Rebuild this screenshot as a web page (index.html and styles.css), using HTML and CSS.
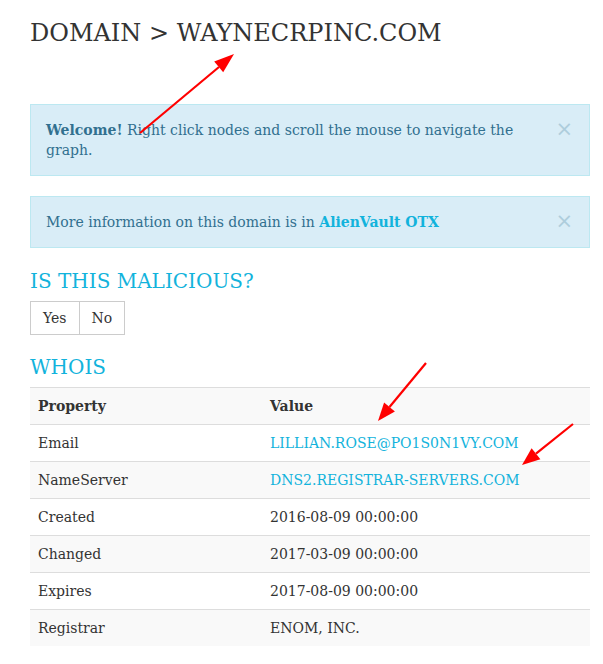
FILE: index.html
```html
<!DOCTYPE html>
<html>
<head>
<meta charset="utf-8">
<link rel="stylesheet" href="styles.css">
</head>
<body>
<div class="page">
  <h1 class="title">DOMAIN &gt; WAYNECRPINC.COM</h1>

  <div class="alert alert-tall">
    <span class="close">×</span>
    <p><strong>Welcome!</strong> Right click nodes and scroll the mouse to navigate the graph.</p>
  </div>

  <div class="alert">
    <span class="close">×</span>
    <p>More information on this domain is in <a class="alert-link" href="#">AlienVault OTX</a></p>
  </div>

  <h3 class="section section-vote">IS THIS MALICIOUS?</h3>
  <div class="btn-group">
    <button class="btn">Yes</button>
    <button class="btn">No</button>
  </div>

  <h3 class="section section-whois">WHOIS</h3>
  <table class="whois">
    <tbody>
      <tr><th class="col-prop">Property</th><th>Value</th></tr>
      <tr><td>Email</td><td><a href="#">LILLIAN.ROSE@PO1S0N1VY.COM</a></td></tr>
      <tr><td>NameServer</td><td><a href="#">DNS2.REGISTRAR-SERVERS.COM</a></td></tr>
      <tr><td>Created</td><td>2016-08-09 00:00:00</td></tr>
      <tr><td>Changed</td><td>2017-03-09 00:00:00</td></tr>
      <tr><td>Expires</td><td>2017-08-09 00:00:00</td></tr>
      <tr><td>Registrar</td><td>ENOM, INC.</td></tr>
    </tbody>
  </table>
</div>

<svg class="annotations" width="603" height="664" viewBox="0 0 603 664">
  <g stroke="#ff0000" stroke-width="2.2" fill="#ff0000">
    <line x1="140" y1="133" x2="219" y2="67"/>
    <polygon stroke="none" points="234,54 223.2,72.2 214.2,61.5"/>
    <line x1="426" y1="363" x2="389.5" y2="407"/>
    <polygon stroke="none" points="378,421 394.9,411.6 384.1,402.6"/>
    <line x1="573" y1="424" x2="536" y2="453.7"/>
    <polygon stroke="none" points="522,465 540.4,459.2 531.6,448.2"/>
  </g>
</svg>
</body>
</html>
```

FILE: styles.css
```css
html, body {
  margin: 0;
  padding: 0;
  background: #fff;
}

body {
  font-family: "DejaVu Serif", serif;
  font-size: 14px;
  line-height: 20px;
  color: #333;
  position: relative;
  width: 603px;
  height: 664px;
  overflow: hidden;
}

.page {
  padding: 0 13px 0 30px;
}

.title {
  font-size: 24px;
  font-weight: normal;
  line-height: 30px;
  margin: 18px 0 56px;
  color: #333;
}

.alert {
  position: relative;
  background: #d9edf7;
  border: 1px solid #bce8f1;
  color: #31708f;
  padding: 15px 50px 15px 15px;
  margin-bottom: 20px;
}

.alert p {
  margin: 0;
}

.alert strong {
  font-weight: bold;
}

.alert-link {
  color: #12b3dc;
  font-weight: bold;
  text-decoration: none;
}

.close {
  position: absolute;
  top: 14px;
  right: 16px;
  font-size: 21px;
  line-height: 20px;
  font-family: "DejaVu Sans", sans-serif;
  color: #31708f;
  opacity: 0.25;
}

.section {
  font-weight: normal;
  color: #12b3dc;
  margin: 0;
}

.section-vote {
  font-size: 20px;
  line-height: 24px;
  margin-top: 21px;
  margin-bottom: 8px;
}

.section-whois {
  font-size: 20px;
  line-height: 24px;
  margin-top: 20px;
  margin-bottom: 8px;
}

.btn-group {
  display: flex;
}

.btn {
  font-family: "DejaVu Serif", serif;
  font-size: 14px;
  line-height: 20px;
  color: #333;
  background: #fff;
  border: 1px solid #ccc;
  padding: 6px 12px;
  margin: 0;
}

.btn + .btn {
  margin-left: -1px;
}

.whois {
  width: 560px;
  border-collapse: collapse;
  border-spacing: 0;
}

.whois th,
.whois td {
  text-align: left;
  padding: 8px;
  line-height: 20px;
  border-top: 1px solid #ddd;
  vertical-align: top;
}

.whois th {
  font-weight: bold;
}

.col-prop {
  width: 216px;
}

.whois tr:nth-child(odd) {
  background: #f9f9f9;
}

.whois a {
  color: #12b3dc;
  text-decoration: none;
}

.annotations {
  position: absolute;
  left: 0;
  top: 0;
  pointer-events: none;
}
```
